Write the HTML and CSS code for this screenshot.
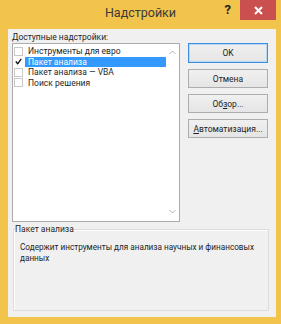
FILE: index.html
```html
<!DOCTYPE html>
<html lang="ru">
<head>
  <meta charset="UTF-8">
  <title>Надстройки</title>
  <link rel="stylesheet" href="styles.css">
</head>
<body>
  <div class="window">
    <div class="titlebar">
      <span></span>
      <div class="title">Надстройки</div>
      <div class="controls">
        <span class="help">?</span>
        <span class="close">
          <svg width="9" height="9" viewBox="0 0 9 9"><path d="M1 1 L8 8 M8 1 L1 8" stroke="#fff" stroke-width="2"/></svg>
        </span>
      </div>
    </div>

    <div class="client">
      <div class="caption">Доступные надстройки:</div>

      <div class="main">
        <div class="listbox">
          <ul class="items">
            <li class="item"><span class="check"></span><span class="name">Инструменты для евро</span></li>
            <li class="item selected"><span class="check checked">
              <svg width="9" height="9" viewBox="0 0 9 9"><path d="M1 4.5 L3.5 7.5 L8 1" stroke="#000" stroke-width="1.6" fill="none"/></svg>
            </span><span class="name">Пакет анализа</span></li>
            <li class="item"><span class="check"></span><span class="name">Пакет анализа — VBA</span></li>
            <li class="item"><span class="check"></span><span class="name">Поиск решения</span></li>
          </ul>
          <div class="scrollbar">
            <svg width="7" height="5" viewBox="0 0 7 5"><path d="M0.5 4 L3.5 1 L6.5 4" stroke="#b4b4b4" fill="none"/></svg>
            <svg width="7" height="5" viewBox="0 0 7 5"><path d="M0.5 1 L3.5 4 L6.5 1" stroke="#b4b4b4" fill="none"/></svg>
          </div>
        </div>

        <div class="buttons">
          <button class="btn default">OK</button>
          <button class="btn">Отмена</button>
          <button class="btn">Об<u>з</u>ор...</button>
          <button class="btn"><u>А</u>втоматизация...</button>
        </div>
      </div>

      <fieldset class="group">
        <legend>Пакет анализа</legend>
        <p class="desc">Содержит инструменты для анализа научных и финансовых данных</p>
      </fieldset>
    </div>
  </div>
</body>
</html>
```

FILE: styles.css
```css
body {
  margin: 0;
  font-family: Roboto, "Noto Sans", sans-serif;
  color: #1e1e1e;
}

.window {
  width: 281px;
  height: 324px;
  background-color: #f2c44c;
  display: flex;
  flex-direction: column;
}

.titlebar {
  height: 29px;
  display: grid;
  grid-template-columns: 1fr auto 1fr;
}

.title {
  font-size: 12.5px;
  line-height: 26px;
  color: #3a3a3a;
}

.controls {
  display: flex;
  justify-content: flex-end;
  align-items: flex-start;
  padding-right: 5px;
}

.help {
  font-size: 13px;
  font-weight: bold;
  line-height: 20px;
  color: #222;
  margin-right: 9px;
}

.close {
  width: 36px;
  height: 20px;
  background-color: #c9504e;
  display: flex;
  align-items: center;
  justify-content: center;
}

.client {
  flex: 1;
  margin: 0 5px 7px 8px;
  background-color: #f0f0f0;
  padding: 2px 7px 6px 4px;
  display: flex;
  flex-direction: column;
}

.caption {
  font-size: 8.5px;
  line-height: 12px;
}

.main {
  display: flex;
  gap: 8px;
  height: 179px;
}

.listbox {
  width: 166px;
  border: 1px solid #acacac;
  background-color: #fff;
  display: flex;
}

.items {
  list-style: none;
  margin: 0;
  padding: 2px 0 0;
  flex: 1;
}

.item {
  height: 10.5px;
  display: flex;
  align-items: center;
  font-size: 8.5px;
}

.check {
  width: 9px;
  height: 9px;
  border: 1px solid #c8c8c8;
  background-color: #fff;
  display: flex;
  align-items: center;
  justify-content: center;
  box-sizing: border-box;
  margin-left: 1px;
}

.check.checked {
  border-color: #fff;
}

.name {
  flex: 1;
  padding-left: 3px;
  margin-left: 2px;
  line-height: 10.5px;
  white-space: nowrap;
}

.selected .name {
  background-color: #3399ff;
  color: #fff;
}

.scrollbar {
  width: 13px;
  display: flex;
  flex-direction: column;
  justify-content: space-between;
  align-items: center;
  padding: 6px 0 7px;
}

.buttons {
  display: flex;
  flex-direction: column;
  gap: 6px;
}

.btn {
  width: 80px;
  height: 19px;
  padding: 0;
  border: 1px solid #adadad;
  background: linear-gradient(#f0f0f0, #e5e5e5);
  font-family: inherit;
  font-size: 8.5px;
  color: #1e1e1e;
}

.btn.default {
  border-color: #3d8ee0;
  box-shadow: inset 0 0 0 1px #b9d6f3;
  height: 20px;
}

.group {
  flex: 1;
  margin: 1px 0 0 1px;
  padding: 0 6px;
  border: 1px solid #dcdcdc;
  box-shadow: inset 1px 1px 0 #fff;
}

.group legend {
  padding: 0;
  margin-left: -5px;
  font-size: 8.5px;
  line-height: 12px;
}

.desc {
  margin: 7px 0 0;
  font-size: 8.2px;
  line-height: 11px;
}
```
